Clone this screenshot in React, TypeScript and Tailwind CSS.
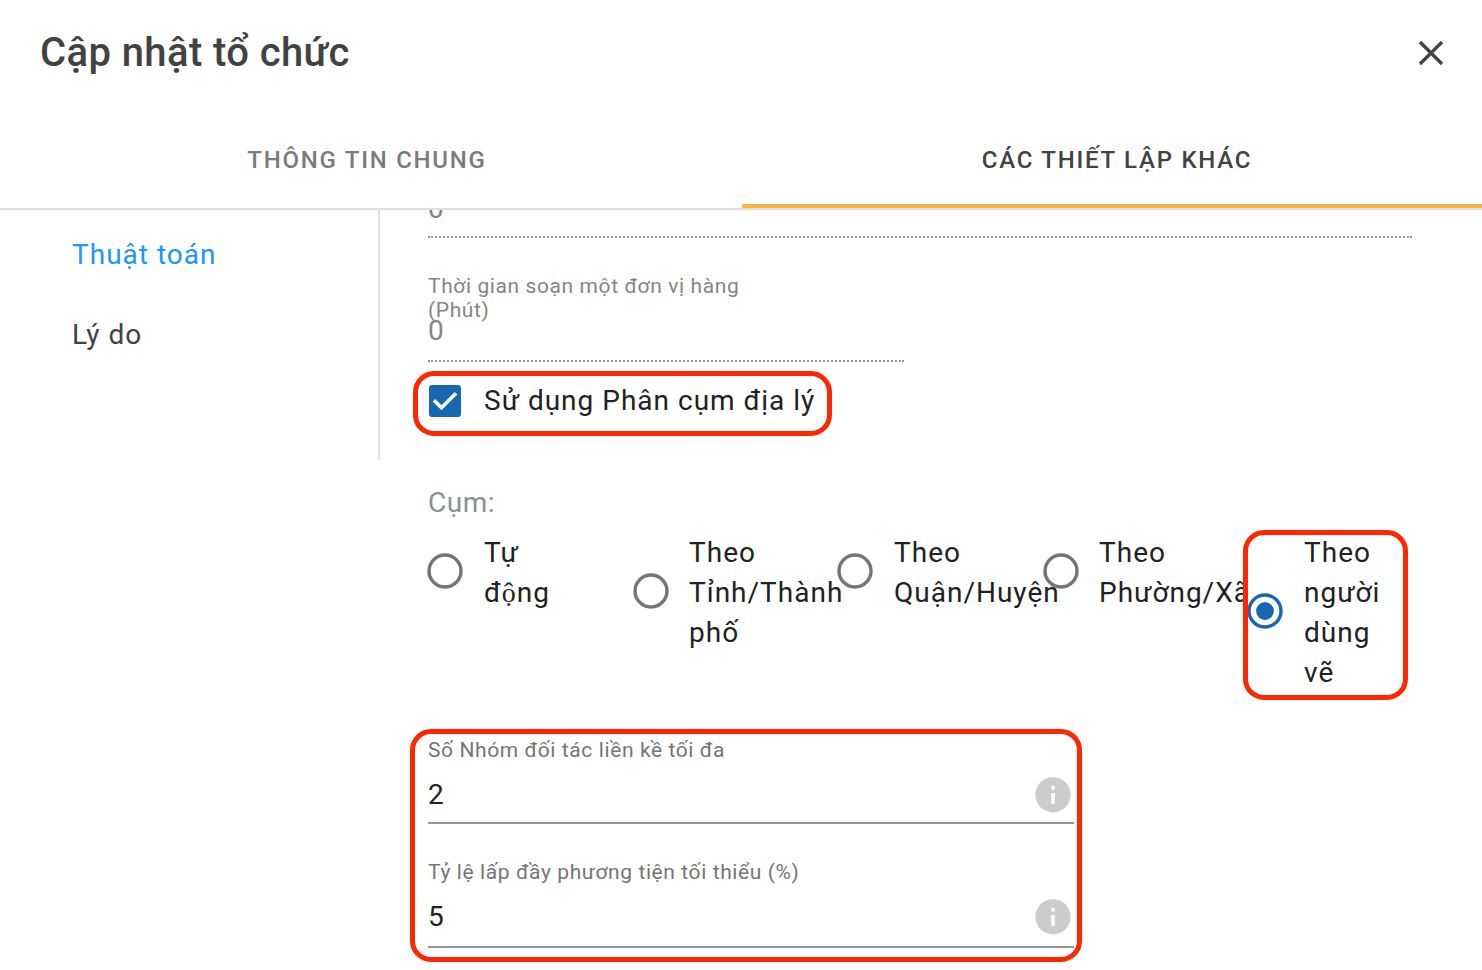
import React from "react";

function Radio({ lines, checked, row, dot = "" }: { lines: React.ReactNode[]; checked?: boolean; row: string; dot?: string }) {
  return (
    <div className={"flex w-[205px] shrink-0 items-center " + row}>
      <svg className={"relative -top-[2px] mr-[21px] -ml-px h-9 w-9 shrink-0 " + dot} viewBox="0 0 36 36" fill="none">
        <circle cx="18" cy="18" r="16" stroke={checked ? "#1867b2" : "#757575"} strokeWidth="3.4" />
        {checked && <circle cx="18" cy="18" r="8.9" fill="#1867b2" />}
      </svg>
      <div className="text-[28px] leading-10 tracking-[1px] whitespace-nowrap text-[#212121]">
        {lines.map((l, i) => (
          <div key={i} className="h-10">{l}</div>
        ))}
      </div>
    </div>
  );
}

function Field({ label, value, box }: { label: string; value: string; box: string }) {
  return (
    <div className="h-[122px] w-[646px]">
      <div className="h-6 text-[21px] leading-6 tracking-[0.6px] text-[#757575]">{label}</div>
      <div className={"flex items-start justify-between border-b-2 border-[#949494] pt-[15px] pr-[3px] " + box}>
        <span className="text-[28px] leading-9 text-[#212121]">{value}</span>
        <svg className="h-9 w-9" viewBox="0 0 36 36">
          <circle cx="18" cy="17.8" r="17.6" fill="#cccccc" />
          <path d="M16.2 9h3.6v3.6h-3.6zM16.2 16.1h3.6v10.7h-3.6z" fill="white" />
        </svg>
      </div>
    </div>
  );
}

export default function App() {
  return (
    <div className="relative h-[970px] w-[1482px] overflow-hidden bg-white font-['Roboto',sans-serif] text-[#212121]">
      <header className="flex h-[112px] items-start justify-between pt-[29px] pr-[38px] pl-10">
        <h1 className="text-[40px] leading-[48px] font-medium tracking-[0.4px] text-[#424242]">Cập nhật tổ chức</h1>
        <svg className="mt-[11px] h-[26px] w-[26px]" viewBox="0 0 26 26" stroke="#424242" strokeWidth="3.3">
          <path d="M2 2l22 22M24 2L2 24" />
        </svg>
      </header>
      <nav className="flex h-[98px] border-b-2 border-[#e0e0e0] text-[24px] font-medium tracking-[1.75px]">
        <div className="flex w-[742px] items-center justify-center pr-2 text-[#7b7b7b]">THÔNG TIN CHUNG</div>
        <div className="flex w-[740px] items-center justify-center border-b-4 border-[#ffb340] pt-1 pl-[10px] text-[#424242]">CÁC THIẾT LẬP KHÁC</div>
      </nav>
      <div className="flex h-[760px]">
        <aside className="h-[250px] w-[380px] border-r-2 border-[#e0e0e0] pt-[25px] pl-[72px] text-[28px] leading-10 tracking-[1px]">
          <div className="h-20 text-[#2196f3]">Thuật toán</div>
          <div className="text-[#424242]">Lý do</div>
        </aside>
        <main className="h-full w-[1102px] overflow-hidden pl-12">
          <div className="h-7 w-[984px] overflow-hidden border-b-2 border-dotted border-[#949494]">
            <div className="-mt-[21px] text-[28px] leading-10 text-[#858585]">0</div>
          </div>
          <div className="h-[124px] w-[476px] border-b-2 border-dotted border-[#949494] pt-9">
            <div className="text-[21px] leading-6 tracking-[0.6px] text-[#858585]">
              Thời gian soạn một đơn vị hàng
              <br />
              (Phút)
            </div>
            <div className="-mt-[11px] text-[28px] leading-10 text-[#858585]">0</div>
          </div>
          <div className="flex h-[78px] items-center gap-[23px]">
            <svg className="ml-px h-8 w-8" viewBox="0 0 32 32">
              <rect width="32" height="32" rx="3" fill="#1867b2" />
              <path d="M5 15.2l7.5 7.5L27 8.2" fill="none" stroke="white" strokeWidth="3.5" />
            </svg>
            <span className="text-[28px] tracking-[1px]">Sử dụng Phân cụm địa lý</span>
          </div>
          <div className="mt-[43px] h-[50px] text-[28px] leading-10 tracking-[0.5px] text-[#8a9094]">Cụm:</div>
          <div className="flex w-[1060px] items-start">
            <Radio
              lines={["Tự", <>đ<span className="font-['Liberation_Serif',serif]">ộ</span>ng</>]}
              row="h-20"
            />
            <Radio lines={["Theo", "Tỉnh/Thành", "phố"]} row="h-[120px]" dot="left-px" />
            <Radio lines={["Theo", "Quận/Huyện"]} row="h-20" />
            <Radio lines={["Theo", "Phường/Xã"]} row="h-20" dot="left-px" />
            <Radio lines={["Theo", "người", "dùng", "vẽ"]} row="h-40" checked />
          </div>
          <div className="pt-[45px]">
            <Field label="Số Nhóm đối tác liền kề tối đa" value="2" box="h-[62px]" />
            <Field label="Tỷ lệ lấp đầy phương tiện tối thiểu (%)" value="5" box="h-16" />
          </div>
        </main>
      </div>
      <div className="absolute top-[371px] left-[413px] h-[65px] w-[419px] rounded-[21px] border-[5px] border-[#ff2600]" />
      <div className="absolute top-[530px] left-[1243px] h-[170px] w-[165px] rounded-[21px] border-[5px] border-[#ff2600]" />
      <div className="absolute top-[729px] left-[410px] h-[233px] w-[672px] rounded-[21px] border-[5px] border-[#ff2600]" />
    </div>
  );
}
